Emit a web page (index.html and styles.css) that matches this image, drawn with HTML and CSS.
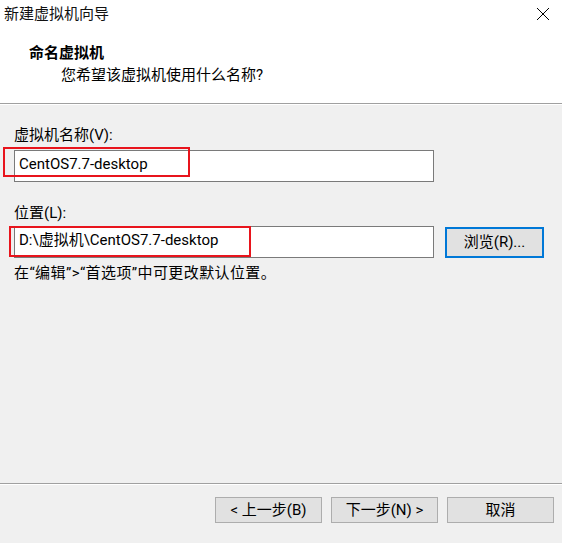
FILE: index.html
```html
<!DOCTYPE html>
<html lang="zh-CN">
<head>
<meta charset="utf-8">
<title>新建虚拟机向导</title>
<link rel="stylesheet" href="styles.css">
</head>
<body>
<div class="window">
  <header class="header">
    <div class="titlebar">
      <span class="title">新建虚拟机向导</span>
      <svg class="close" width="14" height="14" viewBox="0 0 14 14"><path d="M1 1 L13 13 M13 1 L1 13" stroke="#000" stroke-width="1" fill="none"/></svg>
    </div>
    <div class="heading">命名虚拟机</div>
    <div class="subheading">您希望该虚拟机使用什么名称?</div>
  </header>
  <main class="content">
    <label class="label label-name">虚拟机名称(V):</label>
    <div class="field field-name">CentOS7.7-desktop</div>
    <label class="label label-loc">位置(L):</label>
    <div class="row">
      <div class="field field-loc">D:\虚拟机\CentOS7.7-desktop</div>
      <button class="btn browse">浏览(R)...</button>
    </div>
    <p class="note">在“编辑”&gt;“首选项”中可更改默认位置。</p>
  </main>
  <footer class="footer">
    <button class="btn">&lt; 上一步(B)</button>
    <button class="btn">下一步(N) &gt;</button>
    <button class="btn">取消</button>
  </footer>
  <div class="mark mark-name"></div>
  <div class="mark mark-loc"></div>
</div>
</body>
</html>
```
FILE: styles.css
```css
html, body {
  margin: 0;
  padding: 0;
}
body {
  font-family: Roboto, "Noto Sans CJK SC", sans-serif;
  font-size: 15px;
  color: #000;
  background: #f0f0f0;
}
.window {
  position: relative;
  width: 562px;
  height: 543px;
  display: flex;
  flex-direction: column;
  overflow: hidden;
}
.header {
  background: #fff;
  height: 103px;
  border-bottom: 1px solid #a0a0a0;
  box-shadow: 0 1px 0 #fff;
}
.titlebar {
  height: 28px;
  display: flex;
  align-items: center;
  justify-content: space-between;
  padding: 0 12px 0 4px;
}
.title {
  line-height: 28px;
  color: #111;
}
.close {
  display: block;
}
.heading {
  margin-top: 15px;
  padding-left: 29px;
  font-weight: bold;
  line-height: 20px;
}
.subheading {
  margin-top: 2px;
  padding-left: 61px;
  line-height: 20px;
}
.content {
  flex: 1;
  padding: 21px 0 0 14px;
  display: flex;
  flex-direction: column;
  align-items: flex-start;
}
.label {
  line-height: 20px;
  height: 20px;
}
.field {
  box-sizing: border-box;
  width: 420px;
  height: 32px;
  line-height: 26px;
  background: #fff;
  border: 1px solid #7a7a7a;
  padding-left: 4px;
  white-space: nowrap;
}
.field-name {
  margin-top: 5px;
}
.label-loc {
  margin-top: 21px;
}
.row {
  margin-top: 3px;
  display: flex;
  align-items: center;
  gap: 11px;
}
.btn {
  box-sizing: border-box;
  font: inherit;
  color: #000;
  background: #e1e1e1;
  border: 1px solid #adadad;
  width: 107px;
  height: 26px;
  padding: 0;
  line-height: 22px;
}
.btn.browse {
  width: 99px;
  height: 31px;
  border: 2px solid #0078d7;
  line-height: 26px;
}
.note {
  margin: 5px 0 0;
  line-height: 20px;
  letter-spacing: 0.4px;
}
.footer {
  height: 46px;
  border-top: 1px solid #a0a0a0;
  box-shadow: inset 0 1px 0 #fff;
  display: flex;
  justify-content: flex-end;
  align-items: flex-start;
  gap: 9px;
  padding: 13px 8px 0 0;
}
.mark {
  position: absolute;
  border: 2px solid #e8141c;
  box-sizing: border-box;
}
.mark-name {
  left: 3px;
  top: 147px;
  width: 187px;
  height: 30px;
}
.mark-loc {
  left: 9px;
  top: 226px;
  width: 242px;
  height: 31px;
}
```
